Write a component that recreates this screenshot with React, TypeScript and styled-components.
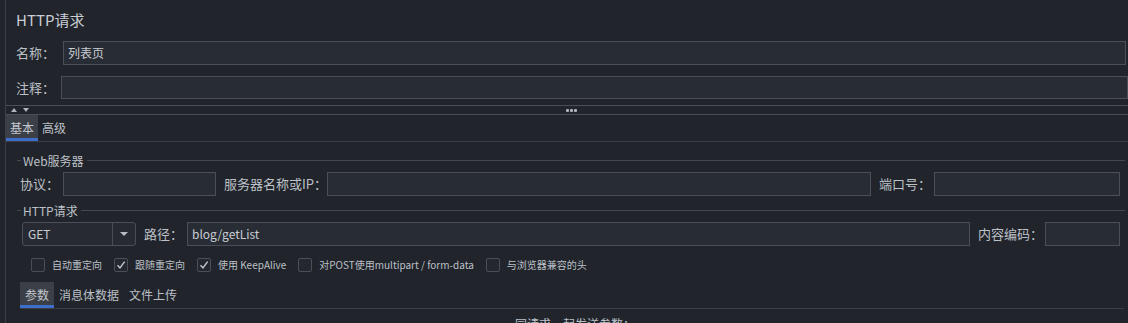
import React from 'react';
import styled, { createGlobalStyle } from 'styled-components';

const C = {
  bg: '#21242b',
  field: '#282c34',
  border: '#4a4e57',
  line: '#3b3e46',
  splitLine: '#4a4d55',
  legendLine: '#45484f',
  text: '#bcc0c7',
  title: '#c9cdd4',
  tabOn: '#3b3f48',
  blue: '#3d6fca',
};

const GlobalStyle = createGlobalStyle`
  html, body {
    margin: 0;
    padding: 0;
    background: ${C.bg};
    overflow: hidden;
  }
  body {
    font-family: "Noto Sans CJK SC", "Noto Sans", sans-serif;
    color: ${C.text};
  }
`;

const S = {
  Page: styled.div`
    width: 1128px;
    height: 323px;
    padding-left: 5px;
    box-sizing: border-box;
    background: ${C.bg};
    overflow: hidden;
  `,
  Frame: styled.div`
    height: 100%;
    border-left: 1px solid ${C.line};
    display: flex;
    flex-direction: column;
    & > * {
      flex-shrink: 0;
    }
  `,
  Title: styled.div`
    height: 36px;
    padding-left: 10px;
    font-size: 15px;
    line-height: 40px;
    color: ${C.title};
  `,
  TopRow: styled.div<{ $top: number; $right: number; $h: number }>`
    display: flex;
    height: ${({ $h }) => $h}px;
    margin-top: ${({ $top }) => $top}px;
    padding: 0 ${({ $right }) => $right}px 0 10px;
  `,
  Label: styled.div<{ $w: number }>`
    flex: 0 0 ${({ $w }) => $w}px;
    font-size: 13px;
    line-height: 24px;
    white-space: nowrap;
  `,
  Field: styled.div<{ $w?: number }>`
    box-sizing: border-box;
    height: 100%;
    ${({ $w }) => ($w ? `flex: 0 0 ${$w}px;` : 'flex: 1;')}
    border: 1px solid ${C.border};
    background: ${C.field};
    font-size: 12px;
    line-height: 22px;
    padding-left: 4px;
    color: #c8ccd3;
  `,
  Splitter: styled.div`
    margin-top: 6px;
    height: 8px;
    border-top: 1px solid ${C.splitLine};
    border-bottom: 1px solid ${C.splitLine};
    display: grid;
    grid-template-columns: 1fr auto 1fr;
    align-items: center;
  `,
  Arrows: styled.div`
    display: flex;
    gap: 6px;
    padding-left: 5px;
    align-items: center;
  `,
  ArrowUp: styled.span`
    width: 0;
    height: 0;
    border-left: 3px solid transparent;
    border-right: 3px solid transparent;
    border-bottom: 4px solid #aeb3bb;
  `,
  ArrowDown: styled.span`
    width: 0;
    height: 0;
    border-left: 3px solid transparent;
    border-right: 3px solid transparent;
    border-top: 4px solid #aeb3bb;
  `,
  Dots: styled.div`
    display: flex;
    gap: 1px;
    margin-left: 8px;
  `,
  Dot: styled.span`
    width: 3px;
    height: 3px;
    border-radius: 1px;
    background: #aeb3bb;
  `,
  TabBar: styled.div<{ $top?: number; $left?: number; $right?: number }>`
    display: flex;
    flex-shrink: 0;
    height: 26px;
    margin-top: ${({ $top }) => $top ?? 0}px;
    margin-left: ${({ $left }) => $left ?? 0}px;
    margin-right: ${({ $right }) => $right ?? 0}px;
    border-bottom: 1px solid ${C.line};
  `,
  Tab: styled.div<{ $on?: boolean; $pad: number }>`
    padding: 0 ${({ $pad }) => $pad}px;
    font-size: 12px;
    line-height: 26px;
    color: ${({ $on }) => ($on ? '#c3c7ce' : C.text)};
    background: ${({ $on }) => ($on ? C.tabOn : 'transparent')};
    box-shadow: ${({ $on }) => ($on ? `inset 0 -3px 0 ${C.blue}` : 'none')};
  `,
  Body: styled.div`
    display: flex;
    flex-direction: column;
    padding: 0 3px 0 11px;
    & > * {
      flex-shrink: 0;
    }
  `,
  Legend: styled.div<{ $top: number }>`
    display: flex;
    align-items: center;
    height: 14px;
    margin-top: ${({ $top }) => $top}px;
    font-size: 12px;
    &::before {
      content: '';
      width: 4px;
      height: 1px;
      background: ${C.legendLine};
      margin-right: 2px;
    }
    &::after {
      content: '';
      flex: 1;
      height: 1px;
      background: ${C.legendLine};
      margin-left: 3px;
    }
  `,
  Row: styled.div`
    display: flex;
    height: 24px;
    margin-top: 5px;
    padding: 0 5px 0 3px;
  `,
  Gap: styled.div`
    flex: 0 0 8px;
  `,
  Combo: styled.div`
    flex: 0 0 114px;
    margin-left: 2px;
    box-sizing: border-box;
    display: flex;
    border: 1px solid ${C.border};
    border-radius: 3px;
    background: #272a32;
    font-size: 12px;
    line-height: 22px;
  `,
  ComboText: styled.div`
    flex: 1;
    padding-left: 5px;
    color: #c8ccd3;
  `,
  ComboButton: styled.div`
    flex: 0 0 22px;
    border-left: 1px solid ${C.border};
    display: flex;
    align-items: center;
    justify-content: center;
    &::after {
      content: '';
      border-left: 4px solid transparent;
      border-right: 4px solid transparent;
      border-top: 4px solid #b7bbc2;
    }
  `,
  CheckRow: styled.div`
    display: flex;
    align-items: center;
    height: 21px;
    margin-top: 8px;
    padding-left: 14px;
    gap: 12px;
  `,
  CheckItem: styled.div`
    display: flex;
    align-items: center;
    gap: 7px;
    font-size: 10px;
    white-space: nowrap;
  `,
  Box: styled.span`
    box-sizing: border-box;
    width: 14px;
    height: 14px;
    border: 1px solid ${C.border};
    border-radius: 2px;
    background: #24272e;
    display: flex;
    align-items: center;
    justify-content: center;
  `,
  Footer: styled.div`
    margin-top: 7px;
    text-align: center;
    font-size: 12px;
    line-height: 16px;
    padding-left: 8px;
  `,
};

const checks = [
  { label: '自动重定向', on: false },
  { label: '跟随重定向', on: true },
  { label: '使用 KeepAlive', on: true },
  { label: '对POST使用multipart / form-data', on: false },
  { label: '与浏览器兼容的头', on: false },
];

const Check = ({ label, on }: { label: string; on: boolean }) => (
  <S.CheckItem>
    <S.Box>
      {on && (
        <svg width="10" height="10" viewBox="0 0 10 10">
          <path d="M1.5 5.2 L4 8 L8.6 1.6" fill="none" stroke="#c3c7ce" strokeWidth="1.4" />
        </svg>
      )}
    </S.Box>
    {label}
  </S.CheckItem>
);

const App = () => (
  <>
    <GlobalStyle />
    <S.Page>
      <S.Frame>
        <S.Title>HTTP请求</S.Title>
        <S.TopRow $top={5} $right={2} $h={24}>
          <S.Label $w={47}>名称：</S.Label>
          <S.Field>列表页</S.Field>
        </S.TopRow>
        <S.TopRow $top={11} $right={0} $h={23}>
          <S.Label $w={45}>注释：</S.Label>
          <S.Field />
        </S.TopRow>
        <S.Splitter>
          <S.Arrows>
            <S.ArrowUp />
            <S.ArrowDown />
          </S.Arrows>
          <S.Dots>
            <S.Dot />
            <S.Dot />
            <S.Dot />
          </S.Dots>
          <div />
        </S.Splitter>
        <S.TabBar>
          <S.Tab $on $pad={4}>基本</S.Tab>
          <S.Tab $pad={4}>高级</S.Tab>
        </S.TabBar>
        <S.Body>
          <S.Legend $top={11}>Web服务器</S.Legend>
          <S.Row>
            <S.Label $w={43}>协议：</S.Label>
            <S.Field $w={153} />
            <S.Gap />
            <S.Label $w={101}>服务器名称或IP：</S.Label>
            <S.Field />
            <S.Gap />
            <S.Label $w={55}>端口号：</S.Label>
            <S.Field $w={186} />
          </S.Row>
          <S.Legend $top={7}>HTTP请求</S.Legend>
          <S.Row>
            <S.Combo>
              <S.ComboText>GET</S.ComboText>
              <S.ComboButton />
            </S.Combo>
            <S.Gap />
            <S.Label $w={43}>路径：</S.Label>
            <S.Field>blog/getList</S.Field>
            <S.Gap />
            <S.Label $w={67}>内容编码：</S.Label>
            <S.Field $w={75} />
          </S.Row>
          <S.CheckRow>
            {checks.map((c) => (
              <Check key={c.label} label={c.label} on={c.on} />
            ))}
          </S.CheckRow>
          <S.TabBar $top={7} $left={3} $right={1}>
            <S.Tab $on $pad={5}>参数</S.Tab>
            <S.Tab $pad={5}>消息体数据</S.Tab>
            <S.Tab $pad={5}>文件上传</S.Tab>
          </S.TabBar>
          <S.Footer>同请求一起发送参数：</S.Footer>
        </S.Body>
      </S.Frame>
    </S.Page>
  </>
);

export default App;
